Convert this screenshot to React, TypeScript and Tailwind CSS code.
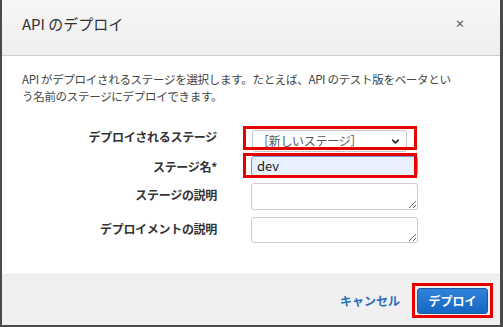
import { ChevronDown } from 'lucide-react'

function App() {
  return (
    <div className="w-[503px] h-[327px] bg-white border-l-2 border-r-[3px] border-b-2 border-[#4a4a4a] flex flex-col font-['Noto_Sans_CJK_JP',sans-serif] text-[#333]">
      {/* Header */}
      <header className="h-[56px] shrink-0 border-b border-[#cdcdcd] bg-gradient-to-b from-[#f6f6f6] to-[#efefef] flex items-start justify-between pl-5 pr-[35px] pt-[13px]">
        <h1 className="text-[15px] leading-[22px] text-[#333]">API のデプロイ</h1>
        <button className="text-[10px] leading-[22px] font-bold text-[#555]">×</button>
      </header>

      {/* Body */}
      <main className="flex-1 pt-[15px]">
        <p className="pl-5 pr-[40px] text-[11.5px] leading-[17px] tracking-[-0.3px] text-[#444]">
          API がデプロイされるステージを選択します。たとえば、API のテスト版をベータという名前のステージにデプロイできます。
        </p>

        <div className="mt-[21px] flex flex-col text-[12px] tracking-[-0.3px]">
          {/* Row 1 */}
          <div className="flex items-start h-[26px]">
            <label className="w-[215px] text-right font-bold leading-[16px] pt-[3px]">デプロイされるステージ</label>
            <div className="relative ml-[34px] w-[167px] h-full">
              <div className="absolute left-[1px] top-[4px] w-[155px] h-[22px] border border-[#c8c8c8] rounded-[3px] bg-white flex items-center justify-between pl-[4px] pr-[5px] text-[#555]">
                <span className="leading-[16px]">［新しいステージ］</span>
                <ChevronDown className="w-[11px] h-[11px] text-[#333]" strokeWidth={4} />
              </div>
              <div className="absolute left-[-8px] top-0 w-[174px] h-[24px] border-[3px] border-[#e60000]" />
            </div>
          </div>

          {/* Row 2 */}
          <div className="flex items-start h-[27px]">
            <label className="w-[215px] text-right font-bold leading-[16px] pt-[7px]">ステージ名*</label>
            <div className="relative ml-[34px] w-[167px] h-full">
              <div className="absolute left-0 top-[4px] w-[167px] h-[20px] border border-[#6d9bd1] rounded-[3px] bg-[#e8f0fe] flex items-center pl-[5px] text-[13px] text-[#222] tracking-normal">
                dev
              </div>
              <div className="absolute left-[-8px] top-[1px] w-[174px] h-[25px] border-[3px] border-[#e60000]" />
            </div>
          </div>

          {/* Row 3 */}
          <div className="flex items-start pt-[4px]">
            <label className="w-[215px] text-right font-bold leading-[16px] pt-[4px]">ステージの説明</label>
            <textarea
              readOnly
              className="ml-[34px] w-[167px] h-[27px] border border-[#cccccc] rounded-[3px] bg-white"
            />
          </div>

          {/* Row 4 */}
          <div className="flex items-start pt-[7px]">
            <label className="w-[215px] text-right font-bold leading-[16px] pt-[4px]">デプロイメントの説明</label>
            <textarea
              readOnly
              className="ml-[34px] w-[167px] h-[26px] border border-[#cccccc] rounded-[3px] bg-white"
            />
          </div>
        </div>
      </main>

      {/* Footer */}
      <footer className="h-[51px] shrink-0 border-t border-[#e6e6e6] bg-[#f0f0f0] flex items-center justify-end gap-[12px] pr-[7px] pt-[1px]">
        <button className="text-[12px] font-bold text-[#2a6ebb]">キャンセル</button>
        <div className="border-[3px] border-[#e60000] px-[2px] py-[1px]">
          <button className="w-[71px] h-[26px] rounded-[3px] border border-[#1a5aa6] bg-gradient-to-b from-[#2f84da] to-[#1766c2] text-[12px] font-bold text-white">
            デプロイ
          </button>
        </div>
      </footer>
    </div>
  )
}

export default App
